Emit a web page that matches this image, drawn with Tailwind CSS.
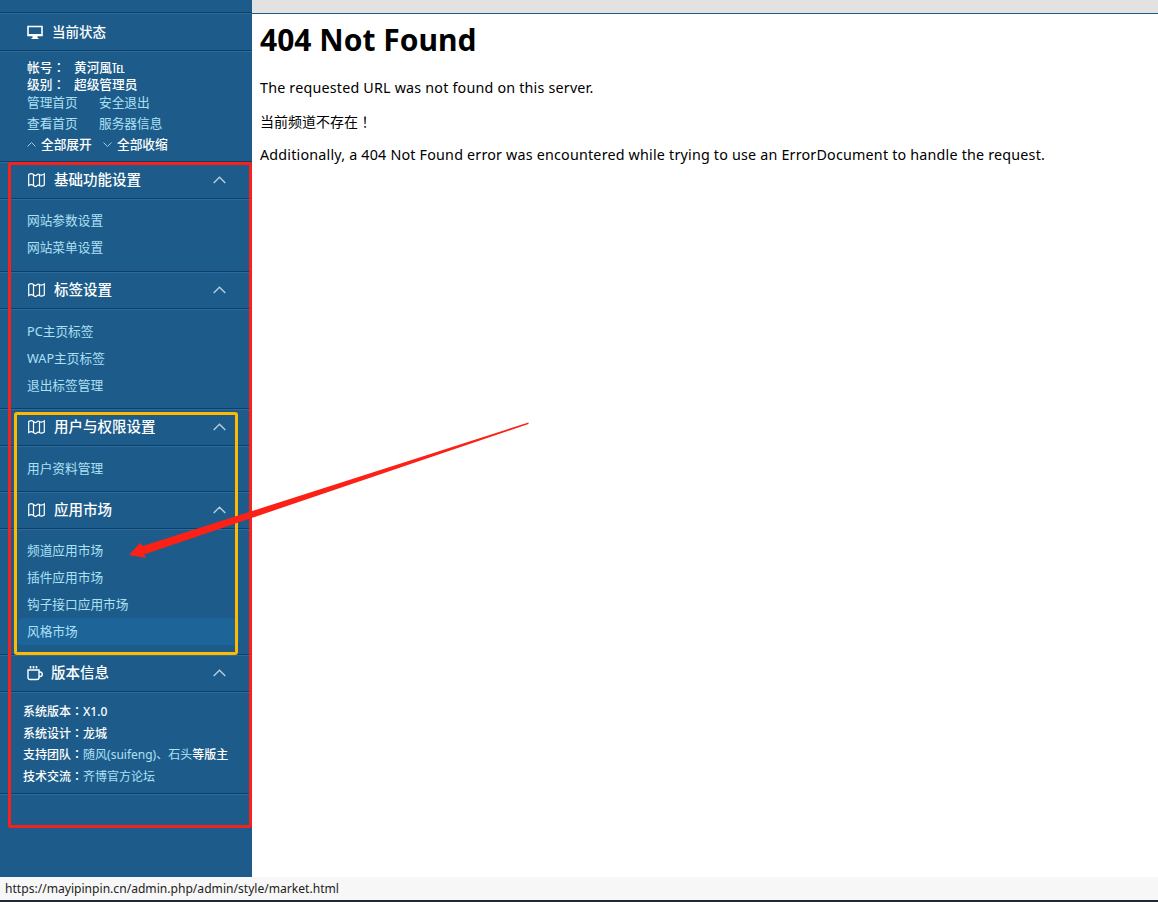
<!DOCTYPE html>
<html lang="zh-CN">
<head>
    <meta charset="UTF-8">
    <title>404 Not Found</title>
    <script src="https://cdn.jsdelivr.net/npm/@tailwindcss/browser@4"></script>
</head>
<body class="relative h-[902px] w-[1158px] overflow-hidden bg-white font-['Noto_Sans','Noto_Sans_CJK_SC',sans-serif]">
    <div class="flex h-[877px]">
        <!-- sidebar -->
        <aside class="w-[252px] shrink-0 bg-[#1d5c8a] font-medium text-white">
            <div class="h-[13px] border-b border-[#0d3f68]"></div>

            <div class="flex h-[38px] items-center border-y border-t-[#2b6c9c] border-b-[#0d3f68] pl-[27px] text-[13.5px]">
                <svg class="mr-[9px] h-[16px] w-[16px]" viewBox="0 0 16 16" fill="none"><path d="M1 2.500h14v9H1z" stroke="#fff" stroke-width="1.600"/><path d="M1 10h14v2H1zM5.500 12h5v2h1v1h-7v-1h1z" fill="#fff"/></svg>
                当前状态
            </div>

            <div class="h-[111px] border-y border-t-[#2b6c9c] border-b-[#0d3f68] pl-[27px] pt-[6px] text-[12.7px] leading-[18px]">
                <div class="flex h-[18px]"><span class="w-[47px]">帐号<span lang="zh-TW" class="font-['Noto_Sans_CJK_TC']">：</span></span><span>黄河風<span lang="zh-TW" class="font-['Noto_Sans_CJK_TC']">℡</span></span></div>
                <div class="-mt-px flex h-[18px]"><span class="w-[47px]">级别<span lang="zh-TW" class="font-['Noto_Sans_CJK_TC']">：</span></span><span>超级管理员</span></div>
                <div class="flex font-normal text-[#aee0f5]"><a class="w-[72px]">管理首页</a><a>安全退出</a></div>
                <div class="mt-[3px] flex font-normal text-[#aee0f5]"><a class="w-[72px]">查看首页</a><a>服务器信息</a></div>
                <div class="mt-[3px] flex items-center">
                    <svg class="mr-[5px] h-[9px] w-[9px]" viewBox="0 0 9 9" fill="none"><path d="M.5 6.500 4.500 2.500l4 4" stroke="#a9c6da"/></svg>
                    <span class="w-[62px]">全部展开</span>
                    <svg class="mr-[5px] h-[9px] w-[9px]" viewBox="0 0 9 9" fill="none"><path d="M.5 2.500l4 4 4-4" stroke="#a9c6da"/></svg>
                    <span>全部收缩</span>
                </div>
            </div>

            <div class="flex h-[37px] items-center border-y border-t-[#2b6c9c] border-b-[#0d3f68] pb-[2px] pl-[28px] pr-[26px] text-[14.5px]">
                <svg class="mr-[9px] h-[16px] w-[17px]" viewBox="0 0 17 16" fill="none" stroke="#fff" stroke-width="1.200"><path d="M.7 2.500c2-1.500 3-1.500 4.800 0 1.500 1.200 2.500 1.200 3 .6 1-1 2-1.500 3-.6 1.500 1.200 2.800 1 4.800-.6v11c-2 1.500-3.300 1.800-4.800.6-1-.9-2-.4-3 .6-.5.6-1.500.6-3-.6-1.800-1.500-2.800-1.500-4.800 0zM5.500 2.500v11M11.500 2.500v11"/></svg>
                <span class="flex-1">基础功能设置</span>
                <svg class="h-[8px] w-[13px]" viewBox="0 0 13 8" fill="none"><path d="M.7 7 6.500 1.200 12.300 7" stroke="#b6cddd" stroke-width="1.400"/></svg>
            </div>
            <div class="h-[73px] border-y border-t-[#2b6c9c] border-b-[#0d3f68] pl-[27px] pt-[7px] text-[12.7px] font-normal leading-[27px] text-[#aee0f5]">
                <div>网站参数设置</div>
                <div>网站菜单设置</div>
            </div>

            <div class="flex h-[37px] items-center border-y border-t-[#2b6c9c] border-b-[#0d3f68] pb-[2px] pl-[28px] pr-[26px] text-[14.5px]">
                <svg class="mr-[9px] h-[16px] w-[17px]" viewBox="0 0 17 16" fill="none" stroke="#fff" stroke-width="1.200"><path d="M.7 2.500c2-1.500 3-1.500 4.800 0 1.500 1.200 2.500 1.200 3 .6 1-1 2-1.500 3-.6 1.500 1.200 2.800 1 4.800-.6v11c-2 1.500-3.300 1.800-4.800.6-1-.9-2-.4-3 .6-.5.6-1.500.6-3-.6-1.800-1.500-2.800-1.500-4.800 0zM5.500 2.500v11M11.500 2.500v11"/></svg>
                <span class="flex-1">标签设置</span>
                <svg class="h-[8px] w-[13px]" viewBox="0 0 13 8" fill="none"><path d="M.7 7 6.500 1.200 12.300 7" stroke="#b6cddd" stroke-width="1.400"/></svg>
            </div>
            <div class="h-[100px] border-y border-t-[#2b6c9c] border-b-[#0d3f68] pl-[27px] pt-[8px] text-[12.7px] font-normal leading-[27px] text-[#aee0f5]">
                <div>PC主页标签</div>
                <div>WAP主页标签</div>
                <div>退出标签管理</div>
            </div>

            <div class="flex h-[37px] items-center border-y border-t-[#2b6c9c] border-b-[#0d3f68] pb-[2px] pl-[28px] pr-[26px] text-[14.5px]">
                <svg class="mr-[9px] h-[16px] w-[17px]" viewBox="0 0 17 16" fill="none" stroke="#fff" stroke-width="1.200"><path d="M.7 2.500c2-1.500 3-1.500 4.800 0 1.500 1.200 2.500 1.200 3 .6 1-1 2-1.500 3-.6 1.500 1.200 2.800 1 4.800-.6v11c-2 1.500-3.300 1.800-4.800.6-1-.9-2-.4-3 .6-.5.6-1.500.6-3-.6-1.800-1.500-2.800-1.500-4.800 0zM5.500 2.500v11M11.500 2.500v11"/></svg>
                <span class="flex-1">用户与权限设置</span>
                <svg class="h-[8px] w-[13px]" viewBox="0 0 13 8" fill="none"><path d="M.7 7 6.500 1.200 12.300 7" stroke="#b6cddd" stroke-width="1.400"/></svg>
            </div>
            <div class="h-[46px] border-y border-t-[#2b6c9c] border-b-[#0d3f68] pl-[27px] pt-[8px] text-[12.7px] font-normal leading-[27px] text-[#aee0f5]">
                <div>用户资料管理</div>
            </div>

            <div class="flex h-[37px] items-center border-y border-t-[#2b6c9c] border-b-[#0d3f68] pb-[2px] pl-[28px] pr-[26px] text-[14.5px]">
                <svg class="mr-[9px] h-[16px] w-[17px]" viewBox="0 0 17 16" fill="none" stroke="#fff" stroke-width="1.200"><path d="M.7 2.500c2-1.500 3-1.500 4.800 0 1.500 1.200 2.500 1.200 3 .6 1-1 2-1.500 3-.6 1.500 1.200 2.800 1 4.800-.6v11c-2 1.500-3.300 1.800-4.800.6-1-.9-2-.4-3 .6-.5.6-1.500.6-3-.6-1.800-1.500-2.800-1.500-4.800 0zM5.500 2.500v11M11.500 2.500v11"/></svg>
                <span class="flex-1">应用市场</span>
                <svg class="h-[8px] w-[13px]" viewBox="0 0 13 8" fill="none"><path d="M.7 7 6.500 1.200 12.300 7" stroke="#b6cddd" stroke-width="1.400"/></svg>
            </div>
            <div class="h-[126px] border-y border-t-[#2b6c9c] border-b-[#0d3f68] pt-[7px] text-[12.7px] font-normal leading-[27px] text-[#aee0f5]">
                <div class="pl-[27px]">频道应用市场</div>
                <div class="pl-[27px]">插件应用市场</div>
                <div class="pl-[27px]">钩子接口应用市场</div>
                <div class="ml-[18px] mr-[13px] rounded-sm bg-[#1d6498] pl-[9px]">风格市场</div>
            </div>

            <div class="flex h-[37px] items-center border-y border-t-[#2b6c9c] border-b-[#0d3f68] pb-[2px] pl-[27px] pr-[26px] text-[14.5px]">
                <svg class="mr-[8px] h-[16px] w-[16px]" viewBox="0 0 16 16" fill="none" stroke="#fff" stroke-width="1.400"><path d="M1 5h11v7.500a2 2 0 0 1-2 2H3a2 2 0 0 1-2-2zM12 7h1a2 2 0 0 1 0 4.500h-1"/><path d="M3.500 1v2.500M6.500 1v2.500M9.500 1v2.500" stroke-width="1.600"/></svg>
                <span class="flex-1">版本信息</span>
                <svg class="h-[8px] w-[13px]" viewBox="0 0 13 8" fill="none"><path d="M.7 7 6.500 1.200 12.300 7" stroke="#b6cddd" stroke-width="1.400"/></svg>
            </div>
            <div class="h-[102px] border-y border-t-[#2b6c9c] border-b-[#0d3f68] pl-[23px] pt-[7px] text-[12px] leading-[21.700px]">
                <div class="h-[21.700px]">系统版本<span lang="zh-TW" class="font-['Noto_Sans_CJK_TC']">：</span>X1.0</div>
                <div class="h-[21.700px]">系统设计<span lang="zh-TW" class="font-['Noto_Sans_CJK_TC']">：</span>龙城</div>
                <div class="h-[21.700px]">支持团队<span lang="zh-TW" class="font-['Noto_Sans_CJK_TC']">：</span><span class="font-normal text-[#aee0f5]">随风(suifeng)、石头</span>等版主</div>
                <div class="h-[21.700px]">技术交流<span lang="zh-TW" class="font-['Noto_Sans_CJK_TC']">：</span><span class="font-normal text-[#aee0f5]">齐博官方论坛</span></div>
            </div>
            <div class="border-t border-[#2b6c9c]"></div>
        </aside>

        <!-- main -->
        <div class="flex-1">
            <div class="h-[14px] border-b border-[#1d5c8a] bg-[#e2e2e2]"></div>
            <main class="pl-[8px] text-[14.3px] tracking-[0.2px] text-black">
                <h1 class="mt-[7px] text-[30px] font-bold leading-[38px] tracking-normal">404 Not Found</h1>
                <p class="mt-[19px] h-[20px] leading-[20px]">The requested URL was not found on this server.</p>
                <p class="mt-[13px] h-[20px] text-[14px] leading-[20px] tracking-normal">当前频道不存在<span lang="zh-TW" class="font-['Noto_Sans_CJK_TC']">！</span></p>
                <p class="mt-[14px] h-[20px] leading-[20px]">Additionally, a 404 Not Found error was encountered while trying to use an ErrorDocument to handle the request.</p>
            </main>
        </div>
    </div>

    <!-- status bar -->
    <div class="flex h-[23px] items-center bg-[#f7f7f7] pl-[5px] pt-px text-[12.100px] text-[#222]">https://mayipinpin.cn/admin.php/admin/style/market.html</div>
    <div class="h-[2px] bg-[#1f2a33]"></div>

    <!-- annotations drawn over the screenshot -->
    <div class="absolute left-[8px] top-[162px] h-[666px] w-[244px] rounded-[2px] border-[3px] border-[#f5211a]"></div>
    <div class="absolute left-[14px] top-[412px] h-[243px] w-[224px] rounded-[3px] border-[3px] border-[#ffb900]"></div>
    <svg class="absolute left-0 top-0" width="1158" height="902" viewBox="0 0 1158 902"><polygon points="528.500,422.500 143,546 140,543 129,555 146,558 144,554.500 528.500,424" fill="#fb2116"/></svg>
</body>
</html>
